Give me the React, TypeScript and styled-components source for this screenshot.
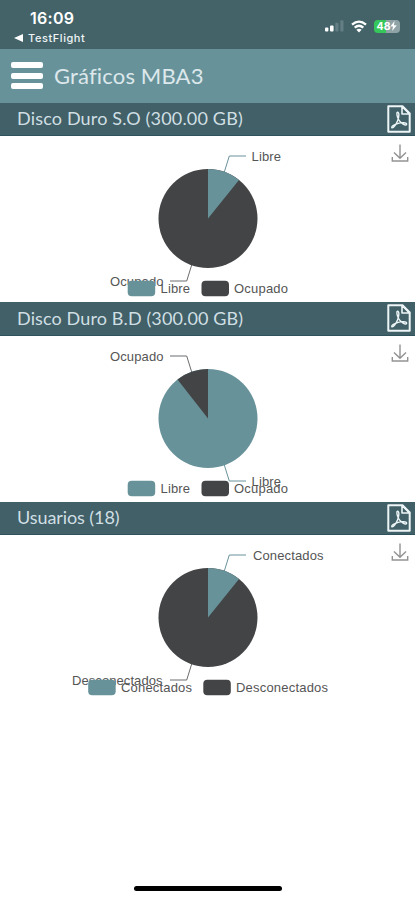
import React from "react";
import styled, { createGlobalStyle } from "styled-components";

const TEAL = "#68929a";
const DARK = "#434446";

const GlobalStyle = createGlobalStyle`
  * { box-sizing: border-box; }
  body { margin: 0; background: #fff; }
`;

const Screen = styled.div`
  width: 415px;
  height: 900px;
  display: flex;
  flex-direction: column;
  background: #fff;
  overflow: hidden;
  font-family: Lato, "Liberation Sans", sans-serif;
`;

const StatusBar = styled.div`
  height: 49px;
  flex: none;
  display: flex;
  justify-content: space-between;
  background: #436369;
  color: #fff;
  padding: 9px 15px 0 14px;
  font-family: Inter, "Liberation Sans", sans-serif;
`;

const StatusLeft = styled.div`
  display: flex;
  flex-direction: column;
`;

const Time = styled.div`
  font-size: 16px;
  line-height: 18px;
  font-weight: 600;
  letter-spacing: 0.3px;
  padding-left: 16px;
`;

const BackLink = styled.div`
  display: flex;
  align-items: center;
  gap: 5px;
  margin-top: 4px;
  font-size: 11px;
  line-height: 14px;
  font-weight: 500;
  letter-spacing: 0.57px;
  color: #eef4f5;
`;

const StatusIcons = styled.div`
  display: flex;
  align-items: center;
  gap: 7px;
  height: 14px;
  margin-top: 10px;
`;

const Battery = styled.div`
  width: 26px;
  height: 13px;
  display: flex;
  align-items: center;
  justify-content: center;
  border-radius: 4px;
  background: linear-gradient(90deg, #35c759 0 48%, #8fa3a6 48%);
  font-size: 10.5px;
  font-weight: 700;
`;

const AppBar = styled.header`
  height: 53.5px;
  flex: none;
  display: flex;
  align-items: center;
  gap: 11px;
  padding-left: 11px;
  background: ${TEAL};
`;

const AppTitle = styled.h1`
  margin: 0;
  font-size: 22px;
  font-weight: 400;
  line-height: 30px;
  letter-spacing: 0.16px;
  color: #dce8eb;
`;

const MenuButton = styled.button`
  width: 32px;
  height: 27px;
  padding: 0;
  border: 0;
  background: none;
  display: flex;
  flex-direction: column;
  justify-content: space-between;
`;

const MenuLine = styled.span`
  height: 6px;
  width: 32px;
  border-radius: 2px;
  background: #fff;
`;

const Section = styled.section`
  height: 199.5px;
  flex: none;
`;

const SectionBar = styled.div`
  height: 33.5px;
  display: flex;
  align-items: center;
  justify-content: space-between;
  padding: 0 4px 0 17px;
  background: #416067;
  border-bottom: 1px solid #2f535c;
`;

const SectionTitle = styled.h2<{ $spacing: number }>`
  margin: 0;
  padding-bottom: 1px;
  font-size: 18px;
  font-weight: 400;
  line-height: 24px;
  letter-spacing: ${(p) => p.$spacing}px;
  color: #d0dfe4;
`;

const ChartSvg = styled.svg`
  display: block;
  font-family: "Liberation Sans", Arial, sans-serif;
  font-size: 13px;
`;

const HomeArea = styled.footer`
  margin-top: auto;
  height: 14px;
  display: flex;
  justify-content: center;
`;

const HomeBar = styled.div`
  width: 148px;
  height: 5px;
  border-radius: 3px;
  background: #000;
`;

const SignalIcon = () => (
  <svg width="19" height="12" viewBox="0 0 19 12">
    <rect x="0" y="7.5" width="3.4" height="4" rx="1" fill="#fff" />
    <rect x="5" y="5.5" width="3.6" height="6" rx="1" fill="#fff" />
    <rect x="10.3" y="2.8" width="3.2" height="8.7" rx="1" fill="#647f84" />
    <rect x="15.3" y="0.3" width="3.2" height="11.2" rx="1" fill="#647f84" />
  </svg>
);

const WifiIcon = () => (
  <svg width="16" height="13" viewBox="0 0 16 13" fill="none" stroke="#fff" strokeWidth="2.3">
    <path d="M1 4.7Q8-1.4 15 4.7" />
    <path d="M3.7 7.6Q8 3.9 12.3 7.6" />
    <path d="M8 12.6L5.4 9.8Q8 7.8 10.6 9.8Z" fill="#fff" stroke="none" />
  </svg>
);

const BoltIcon = () => (
  <svg width="7" height="10" viewBox="0 0 7 10">
    <path d="M4.6 0L.3 5.6H3L2.2 10 6.8 4.2H3.9Z" fill="#fff" />
  </svg>
);

const PdfIcon = () => (
  <svg width="24" height="28" viewBox="0 0 24 28" fill="none" stroke="#edf5f7" strokeLinejoin="round">
    <path d="M1.3 1.3H15.5L22.7 8.5V26.7H1.3Z" strokeWidth="2" />
    <path d="M15 1.5V9H22.5Z" strokeWidth="1.6" />
    <path
      d="M10.4 7.3C12.8 7.3 11.8 12.6 10.6 15.8C9.3 19.2 6.3 23.6 4.9 22.8C3.8 21.4 8 19.4 11.2 18.4C14.4 17.4 20 17.2 19.6 19.4C18.6 21.6 13.1 17.6 11.4 14.2C10.1 11.5 9.2 7.6 10.4 7.3Z"
      strokeWidth="1.4"
    />
  </svg>
);

interface LabelSpec {
  text: string;
  x: number;
  width: number;
  top: boolean;
  right: boolean;
  color: string;
}

interface LegendSpec {
  text: string;
  x: number;
  textX: number;
  width: number;
  color: string;
}

interface ChartSpec {
  title: string;
  spacing: number;
  base: string;
  wedge: string;
  wedgePath: string;
  labels: LabelSpec[];
  legend: LegendSpec[];
}

const RIGHT_WEDGE = "M208 82.5V33A49.5 49.5 0 0 1 239 44Z";
const LEFT_WEDGE = "M208 82.5V33A49.5 49.5 0 0 0 177.5 43.5Z";
const LEADER_DARK = "#6b6c6e";

const diskLegend: LegendSpec[] = [
  { text: "Libre", x: 127.7, textX: 160.5, width: 29.5, color: TEAL },
  { text: "Ocupado", x: 201.5, textX: 234, width: 54, color: DARK },
];

const charts: ChartSpec[] = [
  {
    title: "Disco Duro S.O (300.00 GB)",
    spacing: 0.17,
    base: DARK,
    wedge: TEAL,
    wedgePath: RIGHT_WEDGE,
    labels: [
      { text: "Libre", x: 251.5, width: 29.5, top: true, right: true, color: TEAL },
      { text: "Ocupado", x: 110, width: 53.5, top: false, right: false, color: LEADER_DARK },
    ],
    legend: diskLegend,
  },
  {
    title: "Disco Duro B.D (300.00 GB)",
    spacing: 0.12,
    base: TEAL,
    wedge: DARK,
    wedgePath: LEFT_WEDGE,
    labels: [
      { text: "Ocupado", x: 110, width: 53.5, top: true, right: false, color: LEADER_DARK },
      { text: "Libre", x: 251.5, width: 29.5, top: false, right: true, color: TEAL },
    ],
    legend: diskLegend,
  },
  {
    title: "Usuarios (18)",
    spacing: -0.08,
    base: DARK,
    wedge: TEAL,
    wedgePath: RIGHT_WEDGE,
    labels: [
      { text: "Conectados", x: 253, width: 70.5, top: true, right: true, color: TEAL },
      { text: "Desconectados", x: 72, width: 90.5, top: false, right: false, color: LEADER_DARK },
    ],
    legend: [
      { text: "Conectados", x: 88.2, textX: 121, width: 71, color: TEAL },
      { text: "Desconectados", x: 203.3, textX: 236, width: 92, color: DARK },
    ],
  },
];

const leaderPath = (top: boolean, right: boolean) => {
  const side = right ? 1 : -1;
  const startY = top ? 36 : 129;
  const endY = top ? 20 : 145;
  return `M${208 + side * 16.3} ${startY}L${208 + side * 21.3} ${endY}H${208 + side * 38}`;
};

const PieChart = ({ chart }: { chart: ChartSpec }) => (
  <ChartSvg width="415" height="166" viewBox="0 0 415 166">
    {chart.labels.map((l) => (
      <g key={l.text}>
        <path d={leaderPath(l.top, l.right)} fill="none" stroke={l.color} strokeWidth="1" />
        <text x={l.x} y={l.top ? 24.8 : 150} textLength={l.width} fill="#555">
          {l.text}
        </text>
      </g>
    ))}
    <circle cx="208" cy="82.5" r="49.5" fill={chart.base} />
    <path d={chart.wedgePath} fill={chart.wedge} />
    {chart.legend.map((l) => (
      <g key={l.text}>
        <rect x={l.x} y="144.8" width="27.5" height="15.4" rx="4" fill={l.color} />
        <text x={l.textX} y="157.2" textLength={l.width} fill="#555">
          {l.text}
        </text>
      </g>
    ))}
    <path
      d="M400 8.5V22M394 16.5L400 22.3L406 16.5M392.3 21V25H407.7V21"
      fill="none"
      stroke="#929292"
      strokeWidth="1.4"
    />
  </ChartSvg>
);

export default function App() {
  return (
    <>
      <GlobalStyle />
      <Screen>
        <StatusBar>
          <StatusLeft>
            <Time>16:09</Time>
            <BackLink>
              <svg width="9" height="8" viewBox="0 0 9 8">
                <path d="M0 4L9 0V8Z" fill="#fff" />
              </svg>
              TestFlight
            </BackLink>
          </StatusLeft>
          <StatusIcons>
            <SignalIcon />
            <WifiIcon />
            <Battery>
              48
              <BoltIcon />
            </Battery>
          </StatusIcons>
        </StatusBar>
        <AppBar>
          <MenuButton aria-label="Menú">
            <MenuLine />
            <MenuLine />
            <MenuLine />
          </MenuButton>
          <AppTitle>Gráficos MBA3</AppTitle>
        </AppBar>
        {charts.map((chart) => (
          <Section key={chart.title}>
            <SectionBar>
              <SectionTitle $spacing={chart.spacing}>{chart.title}</SectionTitle>
              <PdfIcon />
            </SectionBar>
            <PieChart chart={chart} />
          </Section>
        ))}
        <HomeArea>
          <HomeBar />
        </HomeArea>
      </Screen>
    </>
  );
}
